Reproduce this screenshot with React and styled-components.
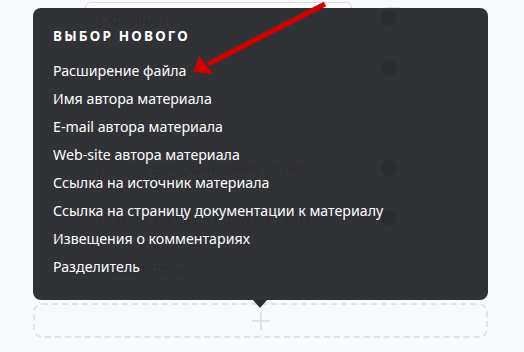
import React from 'react';
import styled, { createGlobalStyle } from 'styled-components';

const Global = createGlobalStyle`
  html, body {
    margin: 0;
    padding: 0;
    background: #f8f9fb;
    font-family: "Noto Sans", "Open Sans", sans-serif;
  }
`

const Page = styled.div`
  position: relative;
  width: 524px;
  height: 352px;
  overflow: hidden;
`
const Fields = styled.div`
  display: flex;
  flex-direction: column;
  gap: 16px;
  width: 455px;
  margin-left: 33px;
  padding-top: 1px;
`
const Row = styled.div`
  display: flex;
  align-items: center;
  height: 34px;
`
const Handle = styled.span`
  width: 10px;
  color: #c8cad0;
  font-size: 12px;
  margin-left: 4px;
`
const Remove = styled.span`
  width: 38px;
  display: flex;
  justify-content: center;
  color: #9a9ca3;
  font-size: 22px;
`
const Field = styled.div`
  box-sizing: border-box;
  width: ${p => (p.$wide ? 328 : 267)}px;
  height: 32px;
  border: 1px solid #dcdde2;
  border-radius: 6px;
  background: #fff;
  padding: 0 12px;
  display: flex;
  align-items: center;
  font-size: 14px;
  color: #1f2024;
  white-space: nowrap;
  overflow: hidden;
`
const Toggle = styled.span`
  width: 30px;
  height: 22px;
  margin-left: 26px;
  border-radius: 11px;
  background: #e4e5ea;
  display: flex;
  align-items: center;
  padding-left: 3px;
  box-sizing: border-box;
  &::before {
    content: '';
    width: 16px;
    height: 16px;
    border-radius: 50%;
    background: #1e1f23;
  }
`
const AddBox = styled.div`
  box-sizing: border-box;
  height: 35px;
  margin-top: 2px;
  border: 2px dashed #e2e3e7;
  border-radius: 9px;
  display: flex;
  align-items: center;
  justify-content: center;
`
const Popup = styled.div`
  position: absolute;
  left: 33px;
  top: 8px;
  width: 455px;
  height: 292px;
  box-sizing: border-box;
  border-radius: 8px;
  background: rgba(44, 45, 49, 0.975);
  padding: 18px 20px;
  &::after {
    content: '';
    position: absolute;
    left: 220px;
    bottom: -8px;
    border-left: 7px solid transparent;
    border-right: 7px solid transparent;
    border-top: 8px solid #2c2d31;
  }
`
const Title = styled.div`
  color: #fff;
  font-weight: 700;
  font-size: 13.5px;
  letter-spacing: 2.2px;
  line-height: 20px;
  margin-bottom: 11px;
`
const Item = styled.div`
  color: #fff;
  font-size: 14.2px;
  line-height: 28px;
  white-space: nowrap;
`
const Annotation = styled.svg`
  position: absolute;
  left: 0;
  top: 0;
  pointer-events: none;
`

const rows = [
  { text: 'Скриншот', toggle: true },
  { text: '', toggle: true },
  { text: '', wide: true },
  { text: 'Ссылка для скачивания архива', toggle: true },
  { text: 'Размер архива на другом сайте', toggle: true },
  { text: 'Разделитель', wide: true },
];

const items = [
  'Расширение файла',
  'Имя автора материала',
  'E-mail автора материала',
  'Web-site автора материала',
  'Ссылка на источник материала',
  'Ссылка на страницу документации к материалу',
  'Извещения о комментариях',
  'Разделитель',
];

export default function App() {
  return (
    <Page>
      <Global />
      <Fields>
        {rows.map((r, i) => (
          <Row key={i}>
            <Handle>⋮</Handle>
            <Remove>×</Remove>
            <Field $wide={r.wide}>{r.text}</Field>
            {r.toggle && <Toggle />}
          </Row>
        ))}
        <AddBox>
          <svg width="20" height="20" viewBox="0 0 20 20">
            <path d="M10 1v18M1 10h18" stroke="#dcdde1" strokeWidth="1.6" fill="none" />
          </svg>
        </AddBox>
      </Fields>
      <Popup>
        <Title>ВЫБОР НОВОГО</Title>
        {items.map(t => (
          <Item key={t}>{t}</Item>
        ))}
      </Popup>
      <Annotation width="524" height="352" viewBox="0 0 524 352">
        <line x1="325" y1="4" x2="208" y2="64" stroke="#d40000" strokeWidth="5" />
        <polygon points="193,72 199,56 213,74" fill="#d40000" />
      </Annotation>
    </Page>
  );
}
